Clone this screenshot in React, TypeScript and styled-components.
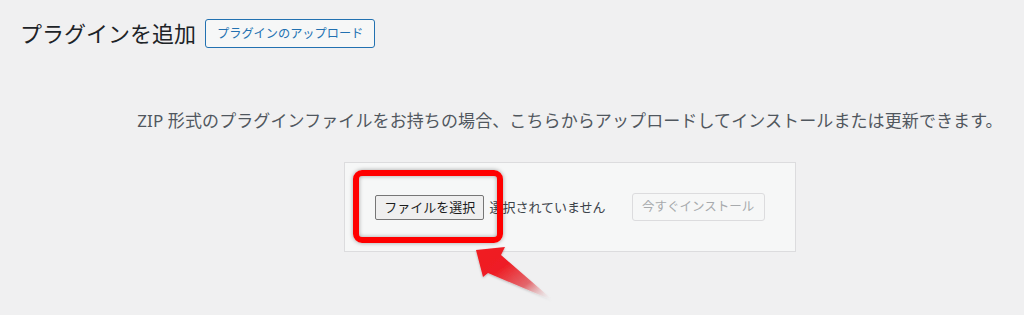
import React from "react";
import styled, { createGlobalStyle } from "styled-components";

const Global = createGlobalStyle`
  html {
    overflow: hidden;
  }
  html, body {
    margin: 0;
    padding: 0;
    background: #f0f0f1;
  }
  body {
    min-height: 315px;
    font-family: "Noto Sans", "Noto Sans CJK JP", sans-serif;
    color: #3c434a;
  }
`;

const Wrap = styled.div`
  padding-left: 20px;
`;

const TitleRow = styled.div`
  display: flex;
  align-items: center;
  gap: 9px;
  margin-top: 19px;
  height: 28px;
`;

const Title = styled.h1`
  margin: 0;
  font-size: 22px;
  font-weight: 400;
  line-height: 28px;
  color: #1d2327;
`;

const ActionButton = styled.button`
  font-family: inherit;
  height: 29px;
  padding: 0 11px;
  border: 1px solid #2271b1;
  border-radius: 3px;
  background: #f6f7f7;
  color: #2271b1;
  font-size: 12.2px;
  line-height: 27px;
  cursor: pointer;
`;

const Section = styled.div`
  padding: 0 20px 0 136px;
`;

const Help = styled.p`
  margin: 62px 0 0;
  font-size: 17px;
  line-height: 24px;
  color: #50575e;
  text-align: center;
  white-space: nowrap;
  letter-spacing: 0.1px;
`;

const FormRow = styled.div`
  display: flex;
  justify-content: center;
  margin-top: 29px;
`;

const UploadForm = styled.form`
  position: relative;
  display: flex;
  align-items: center;
  padding: 30px;
  border: 1px solid #dcdcde;
  background: #f6f7f7;
`;

const FileButton = styled.button`
  font-family: inherit;
  width: 109px;
  height: 25px;
  padding: 0;
  border: 1px solid #767676;
  border-radius: 2px;
  background: #efefef;
  color: #1d1d1d;
  font-size: 13px;
  line-height: 23px;
`;

const FileName = styled.span`
  margin-left: 5px;
  font-size: 13px;
  line-height: 25px;
  color: #3c434a;
`;

const InstallButton = styled.button`
  font-family: inherit;
  margin-left: 26px;
  width: 133px;
  height: 28px;
  padding: 0;
  border: 1px solid #dcdcde;
  border-radius: 3px;
  background: #f6f7f7;
  color: #a7aaad;
  font-size: 12.5px;
  line-height: 26px;
`;

const Highlight = styled.div`
  position: absolute;
  left: 8px;
  top: 7px;
  width: 150px;
  height: 73px;
  box-sizing: border-box;
  border: 6px solid #ff0000;
  border-radius: 9px;
  box-shadow: 0 0 4px rgba(0, 0, 0, 0.35), inset 0 0 4px rgba(0, 0, 0, 0.35);
  pointer-events: none;
`;

const Arrow = styled.svg`
  position: absolute;
  left: 122px;
  top: 76px;
  overflow: visible;
  pointer-events: none;
`;

export default function App() {
  return (
    <>
      <Global />
      <Wrap>
        <TitleRow>
          <Title>プラグインを追加</Title>
          <ActionButton type="button">プラグインのアップロード</ActionButton>
        </TitleRow>
      </Wrap>
      <Section>
        <Help>
          ZIP 形式のプラグインファイルをお持ちの場合、こちらからアップロードしてインストールまたは更新できます。
        </Help>
        <FormRow>
          <UploadForm onSubmit={(e) => e.preventDefault()}>
            <FileButton type="button">ファイルを選択</FileButton>
            <FileName>選択されていません</FileName>
            <InstallButton type="button" disabled>
              今すぐインストール
            </InstallButton>
            <Highlight />
            <Arrow width="96" height="72" viewBox="0 0 96 72">
              <defs>
                <linearGradient id="arrowGrad" x1="0.1" y1="0.1" x2="1" y2="0.95">
                  <stop offset="0" stopColor="#f01c22" />
                  <stop offset="0.3" stopColor="#ee1f26" />
                  <stop offset="0.65" stopColor="#e5565c" stopOpacity="0.85" />
                  <stop offset="1" stopColor="#f0f0f1" stopOpacity="0" />
                </linearGradient>
                <filter id="arrowShadow" x="-20%" y="-20%" width="140%" height="140%">
                  <feDropShadow dx="0" dy="1" stdDeviation="1.2" floodColor="#000" floodOpacity="0.25" />
                </filter>
              </defs>
              <polygon
                points="9,11 38,8 34,16 87,62 21,34 16,38"
                fill="url(#arrowGrad)"
                filter="url(#arrowShadow)"
              />
            </Arrow>
          </UploadForm>
        </FormRow>
      </Section>
    </>
  );
}
